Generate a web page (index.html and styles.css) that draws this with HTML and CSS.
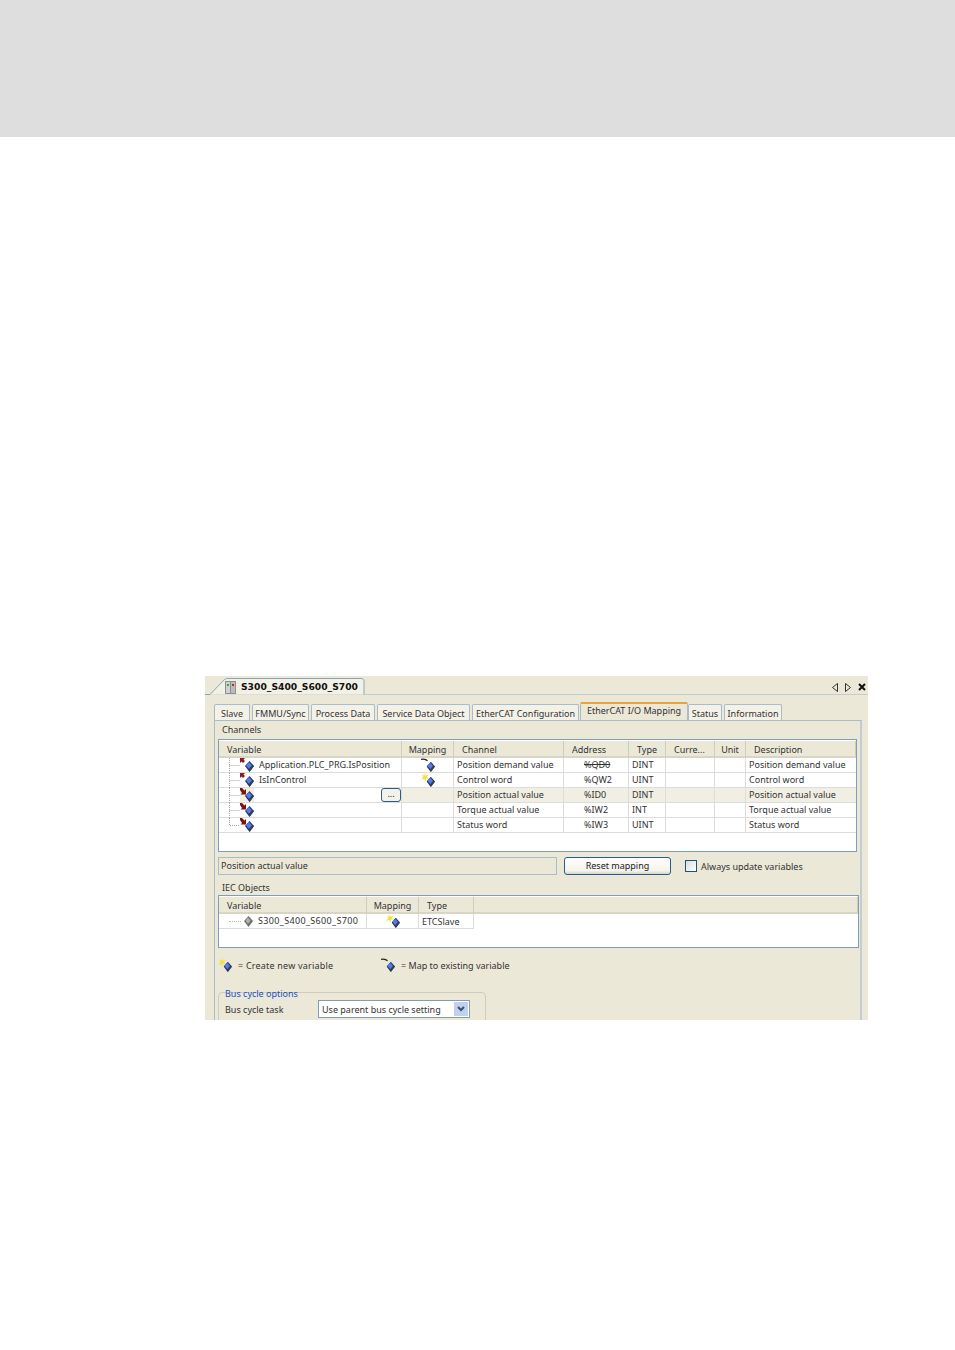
FILE: index.html
```html
<!DOCTYPE html>
<html lang="en">

<head>
	<meta charset="UTF-8">
	<meta name="viewport" content="width=device-width, initial-scale=1.0">
	<title>EtherCAT I/O Mapping</title>
	<link rel="stylesheet" href="styles.css">
</head>

<body>
	<svg class="defs" width="0" height="0">
		<symbol id="obj" viewBox="0 0 9 11">
			<path d="M4.500 0 9 5 4.500 11 0 5z" fill="#24306e"/>
			<path d="M4 1 7 4.500 4 8 1 4.500z" fill="#4f7fe6"/>
			<path d="M4.500 11 9 5 7 4.500 4 8z" fill="#3a3f48"/>
		</symbol>
		<symbol id="obj-gray" viewBox="0 0 9 11">
			<path d="M4.500 0 9 5 4.500 11 0 5z" fill="#6f6f6f"/>
			<path d="M4 1.500 6.500 4.500 4 8 1.500 4.500z" fill="#b0b0b0"/>
		</symbol>
		<symbol id="var-out" viewBox="0 0 14 14">
			<path d="M0 0H5L3.500 1.500 5 3 3 5 1.500 3.500 0 5z" fill="#8c1c1c"/>
			<use href="#obj" x="5" y="3" width="9" height="11"/>
		</symbol>
		<symbol id="var-in" viewBox="0 0 14 14">
			<path d="M0 0H2L4.500 2.500 6 1V6.500H.5L2 5 0 2z" fill="#7d1414"/>
			<use href="#obj" x="5" y="3" width="9" height="11"/>
		</symbol>
		<symbol id="map-new" viewBox="0 0 15 15">
			<path d="M4 0 5 3 8 2 6 4.500 9 6 5.500 6 5 9 3.500 6.500 0 7 2.500 4.500 1 1.500 3.500 3z" fill="#f4e23c"/>
			<use href="#obj" x="6" y="4" width="9" height="11"/>
		</symbol>
		<symbol id="map-old" viewBox="0 0 15 15">
			<path d="M0 1.500C3 .8 5 1 7 3" fill="none" stroke="#222" stroke-width="1.300"/>
			<use href="#obj" x="6" y="4" width="9" height="11"/>
		</symbol>
		<symbol id="tree-mid" viewBox="0 0 11 15">
			<path d="M.5 0V15M.5 7.500H11" fill="none" stroke="#a5a5a5" stroke-dasharray="1 1"/>
		</symbol>
		<symbol id="tree-end" viewBox="0 0 11 15">
			<path d="M.5 0V7.500H11" fill="none" stroke="#a5a5a5" stroke-dasharray="1 1"/>
		</symbol>
	</svg>

	<div class="banner"></div>

	<div class="shot">
		<div class="titlebar">
			<div class="doctab">
				<svg class="doctab-line" width="162" height="18" viewBox="0 0 162 18">
					<path d="M0 16.500H5L19 2C20 1 21 .5 23 .5H156C158 .5 159 1.500 159 3.500V16.500" fill="#f3f1e6" stroke="#8aa5bb"/>
				</svg>
				<svg class="device" width="11" height="13" viewBox="0 0 11 13">
					<rect x="0" y="0" width="11" height="13" fill="#8f8f8f"/>
					<rect x="1" y="1" width="4" height="11" fill="#d0d0d0"/>
					<rect x="6" y="1" width="4" height="11" fill="#bcbcbc"/>
					<rect x="2" y="3" width="2" height="2" fill="#2fae3f"/>
					<rect x="7" y="3" width="2" height="2" fill="#c62828"/>
				</svg>
				<b class="doctab-text">S300_S400_S600_S700</b>
			</div>
			<div class="nav">
				<svg width="6" height="9" viewBox="0 0 6 9"><path d="M5.500.5V8.500L.5 4.500z" fill="none" stroke="#333"/></svg>
				<svg width="6" height="9" viewBox="0 0 6 9"><path d="M.5.5V8.500L5.500 4.500z" fill="none" stroke="#333"/></svg>
				<svg width="8" height="8" viewBox="0 0 8 8"><path d="M1 1 7 7M7 1 1 7" stroke="#111" stroke-width="2"/></svg>
			</div>
		</div>

		<div class="tabs">
			<div class="tab">Slave</div>
			<div class="tab">FMMU/Sync</div>
			<div class="tab">Process Data</div>
			<div class="tab">Service Data Object</div>
			<div class="tab">EtherCAT Configuration</div>
			<div class="tab tab-active">EtherCAT I/O Mapping</div>
			<div class="tab">Status</div>
			<div class="tab">Information</div>
		</div>

		<div class="panel">
			<div class="caption">Channels</div>
			<div class="table channels">
				<div class="row head">
					<div class="cell pad">Variable</div>
					<div class="cell center">Mapping</div>
					<div class="cell pad">Channel</div>
					<div class="cell pad">Address</div>
					<div class="cell center">Type</div>
					<div class="cell pad">Curre...</div>
					<div class="cell center">Unit</div>
					<div class="cell pad">Description</div>
				</div>
				<div class="row">
					<div class="cell var"><svg class="tree"><use href="#tree-mid"/></svg><svg class="ico"><use href="#var-out"/></svg><span class="name">Application.PLC_PRG.IsPosition</span></div>
					<div class="cell center"><svg class="ico"><use href="#map-old"/></svg></div>
					<div class="cell">Position demand value</div>
					<div class="cell addr"><s>%QD0</s></div>
					<div class="cell">DINT</div>
					<div class="cell"></div>
					<div class="cell"></div>
					<div class="cell">Position demand value</div>
				</div>
				<div class="row">
					<div class="cell var"><svg class="tree"><use href="#tree-mid"/></svg><svg class="ico"><use href="#var-out"/></svg><span class="name">IsInControl</span></div>
					<div class="cell center"><svg class="ico"><use href="#map-new"/></svg></div>
					<div class="cell">Control word</div>
					<div class="cell addr">%QW2</div>
					<div class="cell">UINT</div>
					<div class="cell"></div>
					<div class="cell"></div>
					<div class="cell">Control word</div>
				</div>
				<div class="row selected">
					<div class="cell var"><svg class="tree"><use href="#tree-mid"/></svg><span class="ico-sel"><svg class="ico"><use href="#var-in"/></svg></span><button class="dots">...</button></div>
					<div class="cell"></div>
					<div class="cell">Position actual value</div>
					<div class="cell addr">%ID0</div>
					<div class="cell">DINT</div>
					<div class="cell"></div>
					<div class="cell"></div>
					<div class="cell">Position actual value</div>
				</div>
				<div class="row">
					<div class="cell var"><svg class="tree"><use href="#tree-mid"/></svg><svg class="ico"><use href="#var-in"/></svg></div>
					<div class="cell"></div>
					<div class="cell">Torque actual value</div>
					<div class="cell addr">%IW2</div>
					<div class="cell">INT</div>
					<div class="cell"></div>
					<div class="cell"></div>
					<div class="cell">Torque actual value</div>
				</div>
				<div class="row">
					<div class="cell var"><svg class="tree"><use href="#tree-end"/></svg><svg class="ico"><use href="#var-in"/></svg></div>
					<div class="cell"></div>
					<div class="cell">Status word</div>
					<div class="cell addr">%IW3</div>
					<div class="cell">UINT</div>
					<div class="cell"></div>
					<div class="cell"></div>
					<div class="cell">Status word</div>
				</div>
			</div>

			<div class="actions">
				<div class="field">Position actual value</div>
				<button class="btn">Reset mapping</button>
				<span class="check"></span>
				<span>Always update variables</span>
			</div>

			<div class="caption caption-iec">IEC Objects</div>
			<div class="table iec">
				<div class="row head">
					<div class="cell pad">Variable</div>
					<div class="cell center">Mapping</div>
					<div class="cell pad">Type</div>
					<div class="cell"></div>
				</div>
				<div class="row">
					<div class="cell var"><span class="dash"></span><svg class="ico-small"><use href="#obj-gray"/></svg><span class="name-iec">S300_S400_S600_S700</span></div>
					<div class="cell center"><svg class="ico"><use href="#map-new"/></svg></div>
					<div class="cell">ETCSlave</div>
				</div>
			</div>

			<div class="legend">
				<svg class="ico"><use href="#map-new"/></svg>
				<span class="legend-new">= Create new variable</span>
				<svg class="ico"><use href="#map-old"/></svg>
				<span class="legend-map">= Map to existing variable</span>
			</div>

			<div class="group">
				<div class="group-title">Bus cycle options</div>
				<div class="group-row">
					<span class="group-label">Bus cycle task</span>
					<div class="select">
						<span>Use parent bus cycle setting</span>
						<span class="select-arrow">
							<svg width="8" height="6" viewBox="0 0 8 6"><path d="M1 1 4 4 7 1" fill="none" stroke="#33507a" stroke-width="2"/></svg>
						</span>
					</div>
				</div>
			</div>
		</div>
	</div>
</body>

</html>
```

FILE: styles.css
```css
body {
	margin: 0;
	background: #fff;
	font-family: "Noto Sans", "Liberation Sans", sans-serif;
	font-size: 9px;
	color: #333;
}

.defs {
	display: block;
	height: 0;
}

.banner {
	height: 137px;
	background: #dedede;
}

/* the dialog picture, cut off at the bottom */
.shot {
	margin: 539px 0 0 205px;
	width: 663px;
	height: 344px;
	overflow: hidden;
	background: #ebe8d8;
}

.titlebar {
	display: flex;
	justify-content: space-between;
	height: 18px;
	border-bottom: 1px solid #c3ccd0;
}

.doctab {
	position: relative;
	display: flex;
	align-items: center;
	width: 162px;
	height: 18px;
	margin-top: 2px;
	padding-left: 20px;
	box-sizing: border-box;
}

.doctab-line {
	position: absolute;
	left: 0;
	top: 0;
}

.device {
	position: relative;
}

.doctab-text {
	position: relative;
	margin: -2px 0 0 5px;
	font-family: "DejaVu Sans", sans-serif;
	font-size: 9.2px;
	white-space: nowrap;
	color: #111;
}

.nav {
	display: flex;
	align-items: center;
	gap: 7px;
	height: 18px;
	margin-top: 2px;
	padding-right: 2px;
}

.tabs {
	display: grid;
	grid-template-columns: 36px 57px 64px 93px 107px 105px 34px 58px;
	column-gap: 2px;
	align-items: end;
	height: 25px;
	padding-left: 9px;
}

.tab {
	height: 15px;
	line-height: 17px;
	text-align: center;
	white-space: nowrap;
	overflow: hidden;
	border: 1px solid #a9bcc8;
	border-bottom: 0;
	border-radius: 2px 2px 0 0;
	background: #f3f1e8;
}

.tab-active {
	height: 16px;
	line-height: 14px;
	margin: 0 -2px 0 -1px;
	border-top: 2px solid #e8a33d;
	border-color: #e8a33d #a9bcc8 #ebe8d8;
	background: #ebe8d8;
}

.panel {
	position: relative;
	margin-left: 9px;
	width: 648px;
	height: 310px;
	padding: 0 0 0 3px;
	box-sizing: border-box;
	border: 1px solid #a9bcc8;
	border-right: 2px solid #c3ccd0;
}

.caption {
	height: 18px;
	line-height: 18px;
	padding-left: 4px;
}

.table {
	box-sizing: border-box;
	background: #fff;
	border: 1px solid #7f9db9;
}

.channels {
	width: 639px;
	height: 113px;
}

.channels .row {
	grid-template-columns: 183px 52px 110px 65px 37px 49px 31px 1fr;
}

.iec {
	width: 641px;
	height: 53px;
}

.iec .row {
	grid-template-columns: 148px 52px 55px;
	line-height: 16px;
}

.iec .head {
	grid-template-columns: 148px 52px 55px 1fr;
}

.row {
	display: grid;
	height: 15px;
	line-height: 14px;
}

.row .cell {
	box-sizing: border-box;
	height: 15px;
	padding-left: 3px;
	white-space: nowrap;
	border-right: 1px solid #dcdcdc;
	border-bottom: 1px solid #dcdcdc;
}

.row .cell:last-child {
	border-right: 0;
}

.iec .row:not(.head) .cell:last-child {
	border-right: 1px solid #dcdcdc;
}

.row.head {
	height: 18px;
	background: #ebe8d8;
	border-top: 1px solid #fff;
	box-sizing: border-box;
}

.row.head .cell {
	height: 17px;
	line-height: 17px;
	border-right: 1px solid #cfccbc;
	border-bottom: 2px solid #d8d5c5;
}

.row.head .cell.pad {
	padding-left: 8px;
}

.row .cell.center {
	padding-left: 0;
	text-align: center;
}

.row .cell.addr {
	padding-left: 20px;
}

.row.selected .cell:not(.var) {
	background: #f1efe4;
}

.row .cell.var {
	display: flex;
	align-items: center;
	padding-left: 10px;
}

.tree {
	flex: none;
	width: 11px;
	height: 15px;
}

.ico {
	flex: none;
	width: 14px;
	height: 14px;
	vertical-align: top;
}

.ico-small {
	width: 9px;
	height: 11px;
	margin-left: 3px;
}

.ico-sel {
	display: flex;
	height: 14px;
	background: #f1efe4;
}

.name {
	margin-left: 5px;
}

.name-iec {
	margin-left: 5px;
	letter-spacing: 0.35px;
}

.dash {
	width: 12px;
	border-top: 1px dotted #bbb;
}

.dots {
	width: 20px;
	height: 14px;
	margin: 0 0 0 auto;
	padding: 0 0 3px;
	font: inherit;
	line-height: 10px;
	border: 1px solid #2d5a8a;
	border-radius: 3px;
	background: #f2f1ea;
	color: #222;
}

.actions {
	display: flex;
	align-items: center;
	height: 18px;
	margin-top: 5px;
}

.field {
	box-sizing: border-box;
	width: 339px;
	height: 18px;
	line-height: 16px;
	padding-left: 2px;
	border: 1px solid #a9bcc8;
}

.btn {
	width: 107px;
	height: 18px;
	margin-left: 7px;
	padding: 0 0 1px;
	font: inherit;
	color: #222;
	border: 1px solid #2d5a8a;
	border-radius: 3px;
	background: linear-gradient(#fff, #f4f3ec 80%, #d8d4c4);
}

.check {
	box-sizing: border-box;
	width: 12px;
	height: 12px;
	margin: 0 4px 0 14px;
	border: 1px solid #1c5180;
	background: linear-gradient(135deg, #dcdcd6, #fff);
}

.caption-iec {
	margin-top: 2px;
	line-height: 21px;
}

.legend {
	display: flex;
	align-items: center;
	height: 18px;
	margin-top: 8px;
}

.legend-new {
	width: 143px;
	margin-left: 6px;
	letter-spacing: 0.2px;
}

.legend-map {
	margin-left: 6px;
}

.group {
	box-sizing: border-box;
	width: 268px;
	height: 60px;
	margin-top: 18px;
	padding: 0 6px;
	border: 1px solid #cfccbc;
	border-radius: 4px;
}

.group-title {
	width: fit-content;
	height: 7px;
	line-height: 1px;
	padding-right: 3px;
	color: #1c4fc4;
	background: linear-gradient(#ebe8d8, #ebe8d8) 0 -4px / 100% 8px no-repeat;
}

.group-row {
	display: flex;
	align-items: center;
}

.group-label {
	width: 93px;
}

.select {
	display: flex;
	align-items: center;
	justify-content: space-between;
	box-sizing: border-box;
	width: 152px;
	height: 18px;
	padding-left: 3px;
	border: 1px solid #7f9db9;
	background: #fff;
}

.select-arrow {
	display: flex;
	align-items: center;
	justify-content: center;
	width: 14px;
	height: 14px;
	margin-right: 1px;
	background: #c3d0ec;
}
```
